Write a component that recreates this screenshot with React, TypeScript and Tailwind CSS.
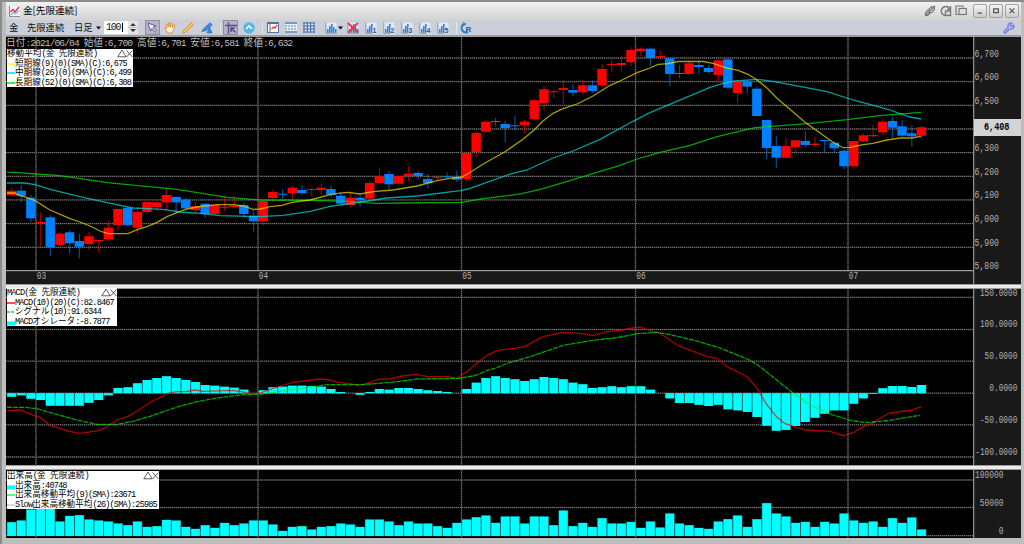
import type { ReactNode } from "react";
import { Wrench } from "lucide-react";

type Point = [number, number];
// color, high, body top, body bottom, low
type Candle = ["r" | "b", number, number, number, number];

const STEP = 9.68;
const START = 11.5;
const MONTHS = [
  { x: 36, label: "03" },
  { x: 258, label: "04" },
  { x: 461.5, label: "05" },
  { x: 635.5, label: "06" },
  { x: 848, label: "07" },
];

const candles: Candle[] = [
  ["r", 187.7, 190.7, 195.3, 195.7], ["b", 185, 190.7, 196, 202], ["b", 194.7, 197.7, 218.3, 222],
  ["r", 212.7, 222, 223, 246.7], ["b", 215, 217.3, 247.3, 256], ["r", 231.7, 233.7, 245, 247.7],
  ["b", 230.7, 232.3, 243.3, 253.7], ["b", 234, 241, 246.7, 258.3], ["r", 231.7, 236.3, 244, 250],
  ["r", 240, 240, 241, 252.7], ["r", 221.3, 227.7, 239.3, 240.7], ["r", 209, 209, 225.3, 231],
  ["b", 206.7, 208, 225.3, 225.7], ["r", 207.3, 212, 227.7, 234.7], ["r", 201, 202, 212, 214],
  ["r", 201.7, 202.3, 207, 210.7], ["r", 187.3, 195, 202.3, 210.3], ["b", 196.3, 197, 202.3, 213.3],
  ["b", 197.7, 199.7, 208.3, 209.3], ["r", 201.7, 206, 210.3, 213.3], ["b", 203.3, 203.7, 214, 217.7],
  ["r", 205, 205, 214, 214], ["r", 196, 206.7, 207.7, 211.3], ["r", 196, 205.7, 207, 207.3],
  ["b", 202.7, 205, 214, 218], ["b", 210, 215.7, 221.3, 231.7], ["r", 199.3, 201, 221.3, 225.3],
  ["r", 189.3, 192, 198, 202.3], ["b", 189.3, 193.7, 194.7, 198.7], ["r", 185.7, 187.7, 193.3, 199],
  ["b", 185, 190, 193.3, 194.7], ["r", 188, 189, 190, 196], ["r", 183.3, 187.7, 190, 194.7],
  ["b", 185.7, 189, 194.7, 197.3], ["b", 192.3, 195.7, 203.7, 204.7], ["r", 191.3, 197.7, 205, 207],
  ["b", 194.7, 197.7, 200.3, 206.7], ["r", 180.3, 183, 198.7, 199.7], ["r", 167.3, 176.3, 183, 184],
  ["b", 171, 174, 184.3, 189.3], ["r", 176, 176, 183.7, 184.3], ["r", 166, 173.7, 176, 181.7],
  ["b", 171, 173, 176, 179.3], ["b", 174.3, 179, 183.3, 188.3], ["r", 176.3, 177.3, 178.3, 180],
  ["b", 172.7, 176.3, 177.3, 178.7], ["b", 170.7, 177, 179.7, 182], ["r", 152, 153, 179.3, 181.3],
  ["r", 131, 133, 152, 157.7], ["r", 120.3, 121.7, 131.7, 133.3], ["b", 117.7, 121, 122, 126.3],
  ["b", 121, 124, 128, 142.7], ["b", 116, 125.3, 126.3, 131], ["r", 120, 121.7, 125.3, 133.7],
  ["r", 99, 100.3, 119.3, 120], ["r", 86, 89.3, 103.3, 110.7], ["r", 89.3, 91.3, 92.3, 98],
  ["r", 79.7, 88, 90, 104], ["b", 84.7, 90, 92.7, 96], ["r", 80, 85.3, 92.3, 94],
  ["b", 80.3, 85.3, 91, 93], ["r", 64, 69, 85.3, 87.7], ["r", 59.3, 64, 65, 72.7],
  ["r", 56, 63, 65, 71.3], ["r", 47.3, 50, 62.3, 66.3], ["r", 47.3, 48.7, 51.3, 56],
  ["b", 47.3, 48.7, 58, 66.3], ["r", 50, 56, 57, 58], ["b", 58.3, 58.3, 74, 86],
  ["b", 65, 73, 74, 78], ["r", 60, 63.3, 74, 75.7], ["b", 60.3, 65, 67, 74],
  ["b", 65, 68, 72, 73.3], ["r", 59.3, 60.3, 75, 82], ["b", 59.3, 59.3, 87.7, 89],
  ["r", 80.3, 81.3, 93, 102.7], ["b", 80, 81.3, 86.7, 93.3], ["b", 86.7, 88.7, 116, 116],
  ["b", 120, 120, 148, 159], ["b", 136.3, 146, 157.7, 167.7], ["r", 138.7, 146, 157.7, 157.7],
  ["r", 140.3, 140.3, 147.3, 152.7], ["b", 131, 141, 145, 147], ["r", 136.7, 143.7, 145, 146.7],
  ["b", 139.3, 140, 141, 152.7], ["b", 141.7, 142.7, 148.3, 152.3], ["b", 149.3, 150.7, 166.3, 169.3],
  ["r", 141, 141, 166.3, 169.3], ["r", 133.3, 135.3, 141.3, 142], ["r", 124.7, 135, 136.3, 137],
  ["r", 120.3, 121.7, 132.3, 135], ["b", 117, 121, 127.7, 138.3], ["b", 120, 126.3, 135.7, 137],
  ["b", 125.7, 133.3, 136.3, 146.7], ["r", 125.7, 127.3, 135.7, 139.7],
];

const shortMa: Point[] = [
  [7, 193], [15, 193], [20, 195.7], [27, 197.7], [35, 200.7], [50, 210], [70, 218.7], [80, 222], [90, 226],
  [100, 231], [108, 233.6], [128, 233.6], [138, 229.3], [147, 226.7], [157, 222.3], [167, 216.7], [177, 212.7],
  [187, 209], [197, 207], [217, 204.7], [233, 204.7], [243, 206], [253, 209.3], [260, 209], [270, 206.7],
  [282, 205.3], [292, 202.3], [310, 200], [330, 194.7], [338, 193.3], [348, 192.3], [360, 194], [373, 191.7],
  [393, 190], [417, 186], [437, 180.7], [450, 178.3], [462, 177], [467, 174.3], [485, 163], [505, 151.7],
  [523, 139.3], [535, 129.3], [542, 121.7], [553, 113.3], [563, 108.7], [577, 104], [593, 96], [610, 85.3],
  [620, 81], [637, 72.7], [650, 68], [658, 64.3], [668, 63.7], [678, 61.5], [703, 61.5], [713, 63.3], [727, 68],
  [738, 70.3], [748, 74.3], [758, 80.7], [767, 88], [777, 98.3], [805, 122.3], [833, 142.3], [843, 147.7],
  [850, 147.3], [863, 144.7], [873, 143.3], [887, 140], [900, 138], [912, 138], [921, 136.3],
];
const midMa: Point[] = [
  [7, 183], [25, 183], [35, 184.7], [50, 189.3], [80, 196.7], [107, 202.7], [133, 208], [163, 209.3], [180, 212],
  [200, 213.3], [220, 215.7], [260, 216.7], [283, 215.3], [310, 211.3], [330, 206.3], [347, 204], [387, 198],
  [417, 196], [460, 190.7], [468, 189], [510, 174], [527, 170], [553, 158], [573, 151], [600, 139.3],
  [633, 121.3], [650, 112.7], [710, 87.3], [722, 83.7], [735, 81], [757, 79.3], [773, 81.3], [827, 91.7],
  [853, 100], [887, 109], [910, 117], [921, 119],
];
const longMa: Point[] = [
  [7, 172.3], [15, 172.3], [35, 174], [60, 175.7], [107, 182.7], [177, 189.3], [227, 197.3], [260, 200],
  [310, 200.3], [350, 201.3], [375, 203.3], [403, 203], [462, 202.3], [483, 198.7], [510, 195.3], [522, 193.7],
  [543, 188.7], [583, 176.7], [620, 165.3], [637, 159], [660, 152.3], [690, 145.3], [717, 136.7], [755, 127.7],
  [810, 123.3], [847, 119.7], [880, 115.7], [921, 112.3],
];
const macdLine: Point[] = [
  [7, 410.7], [21, 410], [28, 413.3], [40, 417.3], [50, 425.3], [68, 431], [79, 433.3], [100, 430.3], [108, 426],
  [117, 420], [128, 416.3], [137, 411.3], [147, 404.3], [167, 393.7], [177, 391.7], [187, 391.5], [195, 390],
  [203, 391.3], [233, 390.3], [245, 392.3], [253, 394], [260, 393], [277, 387], [293, 382.3], [320, 379],
  [330, 380], [337, 382.3], [350, 383.7], [359, 385.7], [370, 382.7], [378, 379.3], [390, 379], [402, 376],
  [416, 374.3], [427, 376.7], [448, 376.7], [457, 378.3], [468, 370.7], [478, 362.3], [487, 355.3], [497, 350.7],
  [515, 348.3], [525, 346.3], [543, 336.7], [563, 332.3], [583, 333.7], [592, 335.7], [608, 331.7], [620, 330.3],
  [632, 328], [640, 327], [650, 330.7], [660, 333.3], [678, 345.7], [707, 356.7], [717, 358.3], [727, 366.7],
  [747, 376.7], [757, 388.3], [767, 405], [777, 417.3], [785, 423.7], [805, 430], [830, 431.3], [843, 435.7],
  [853, 432.7], [863, 426.7], [872, 423.3], [882, 417], [890, 413], [912, 410], [921, 406.7],
];
const signalLine: Point[] = [
  [7, 407.3], [24, 407.3], [37, 408.7], [55, 414], [77, 420], [97, 424.3], [117, 424.3], [133, 421.3],
  [150, 416.3], [177, 407], [197, 401.7], [217, 398], [243, 394.7], [260, 394.3], [290, 390], [327, 384.7],
  [363, 384.7], [397, 381.7], [417, 379], [460, 378.3], [477, 375], [487, 370.3], [497, 367.7], [507, 363.3],
  [530, 356.7], [563, 345.3], [593, 340.3], [617, 337.7], [637, 333.7], [657, 332.3], [670, 334.7], [693, 340],
  [720, 348], [750, 360.3], [760, 366.7], [792, 392.3], [810, 405], [833, 415], [850, 420.3], [867, 422.7],
  [890, 420.3], [920, 415.3],
];

const MACD_ZERO = 393.2;
const oscillator = [
  396.7, 395.3, 398.7, 400, 405.7, 405.7, 405.7, 405.7, 402.7, 400, 395.3, 388, 387.3, 383.3, 380, 378, 376.3,
  378, 380, 382, 385, 385.7, 386.7, 387.7, 389.7, 393.2, 390.3, 387.3, 386.7, 385.7, 385.7, 386, 386.7, 389, 392,
  393.2, 394.7, 392, 389, 389.7, 388, 388, 389, 390.3, 391, 392, 393.2, 389, 382.7, 378, 376.3, 378, 379.3, 381,
  379.3, 377, 378, 379.3, 382.7, 384.3, 388, 387.3, 386.3, 387.3, 386.3, 386.3, 389.7, 393.2, 398.3, 403, 403,
  404.7, 406, 404.7, 409.3, 410.3, 412, 417, 425.7, 430.7, 430, 426, 422, 417.7, 413.7, 410.3, 410.3, 403.7,
  398.3, 394, 388.3, 386, 386, 387, 385,
];

// bar heights in thirds of a pixel
const volumes = [
  41, 46, 79, 81, 81, 43, 60, 62, 49, 46, 43, 37, 32, 43, 27, 29, 48, 46, 27, 21, 32, 24, 39, 32, 37, 46, 46, 34,
  15, 27, 29, 19, 27, 29, 37, 34, 27, 49, 49, 43, 32, 43, 37, 37, 29, 24, 39, 49, 56, 61, 39, 58, 58, 37, 58, 58,
  32, 76, 29, 39, 27, 53, 37, 37, 42, 24, 43, 25, 67, 37, 32, 24, 21, 43, 50, 61, 27, 50, 98, 67, 58, 39, 42, 27,
  42, 37, 67, 46, 39, 43, 27, 53, 39, 55, 19,
];

const center = (i: number) => START + i * STEP;
const toPoints = (pts: Point[]) => pts.map((p) => p.join(",")).join(" ");

// half-width characters are set tighter than the kanji / kana around them
function MixedText({ text, tight }: { text: string; tight: string }) {
  const runs = text.match(/[\x20-\x7e]+|[^\x20-\x7e]+/g) ?? [];
  return (
    <>
      {runs.map((run, i) => (
        <span key={i} className={/[\x20-\x7e]/.test(run) ? tight : undefined}>
          {run}
        </span>
      ))}
    </>
  );
}

function Grid({ rows, top, bottom }: { rows: number[]; top: number; bottom: number }) {
  return (
    <g>
      {rows.map((y) => (
        <g key={y}>
          <line x1={6} x2={973} y1={y} y2={y} stroke="#2e2e2e" strokeWidth={1.3} />
          <line x1={6} x2={973} y1={y} y2={y} stroke="#7a7a7a" strokeWidth={1} strokeDasharray="1 1" />
        </g>
      ))}
      {MONTHS.map((m) => (
        <g key={m.x}>
          <line x1={m.x} x2={m.x} y1={top} y2={bottom} stroke="#333333" strokeWidth={1.4} />
          <line x1={m.x} x2={m.x} y1={top} y2={bottom} stroke="#707070" strokeWidth={1} strokeDasharray="1 1" />
        </g>
      ))}
    </g>
  );
}

function Line({ data, color, dash }: { data: Point[]; color: string; dash?: string }) {
  return (
    <polyline
      points={toPoints(data)}
      fill="none"
      stroke={color}
      strokeOpacity={0.7}
      strokeWidth={1.3}
      strokeDasharray={dash}
    />
  );
}

function Plot({ top, height, rows, children }: { top: number; height: number; rows: number[]; children: ReactNode }) {
  return (
    <svg width={967} height={height} viewBox={`6 ${top} 967 ${height}`} className="block shrink-0 bg-black">
      <Grid rows={rows} top={top} bottom={top + height} />
      {children}
    </svg>
  );
}

function Axis({
  top,
  height,
  labels,
  right,
  charWidth,
  children,
}: {
  top: number;
  height: number;
  labels: [string, number][];
  right: number;
  charWidth: number;
  children?: ReactNode;
}) {
  return (
    <svg
      width={48}
      height={height}
      viewBox={`973 ${top} 48 ${height}`}
      className="block shrink-0 bg-[#191919] font-['Liberation_Mono',monospace] text-[10px]"
    >
      <rect x={973} y={top} width={1.3} height={height} fill="#8c8c8c" />
      {labels.map(([text, y]) => (
        <text
          key={text}
          transform={`translate(${right - text.length * charWidth} ${y + 3.3}) scale(${charWidth / 6} 1)`}
          fill="#b0b0b0"
        >
          {text}
        </text>
      ))}
      {children}
    </svg>
  );
}

type LegendRow = { text: string; color: string; kind: "line" | "dash" | "box" };

function Legend({ title, rows, className }: { title: string; rows: LegendRow[]; className: string }) {
  return (
    <div
      className={`absolute left-px bg-white pt-px text-black text-[8.6px] leading-[9.5px] whitespace-pre font-['Liberation_Mono','Noto_Sans_CJK_JP',monospace] ${className}`}
    >
      <div className="flex h-[9.5px] justify-between">
        <span>
          <MixedText text={title} tight="tracking-[-0.86px]" />
        </span>
        <svg width={16} height={9} viewBox="0 0 16 9" fill="none" stroke="#333" strokeWidth={0.8} className="-mt-px">
          <path d="M.8 7.8 5 1l4.2 6.800z" />
          <path d="m9.500 1.500 6 6.500M15.500 1.500l-6 6.500" />
        </svg>
      </div>
      {rows.map((row) => (
        <div key={row.text} className="flex h-[9.5px]">
          <svg width={8} height={9} viewBox="0 0 8 9" className="shrink-0">
            {row.kind === "box" ? (
              <rect y={3.5} width={8} height={4} fill={row.color} />
            ) : (
              <line
                x1={0}
                x2={8}
                y1={4}
                y2={4}
                stroke={row.color}
                strokeWidth={1.7}
                strokeDasharray={row.kind === "dash" ? "3 1" : undefined}
              />
            )}
          </svg>
          <span>
            <MixedText text={row.text} tight="tracking-[-0.86px]" />
          </span>
        </div>
      ))}
    </div>
  );
}

function Divider() {
  return <div className="h-[5px] shrink-0 border-t border-b border-[#9a9a9a] bg-[#ececec]" />;
}

function ToolButton({ active, children }: { active?: boolean; children: ReactNode }) {
  return (
    <div
      className={`flex h-[15px] w-[15px] shrink-0 items-center justify-center ${
        active ? "border border-[#8d8da0] bg-[#b4b4c4]" : ""
      }`}
    >
      {children}
    </div>
  );
}

function Separator() {
  return <div className="h-3 w-px shrink-0 bg-[#e4e6ec]" />;
}

function BarsIcon({ mark }: { mark?: string }) {
  return (
    <svg width={12} height={12} viewBox="0 0 12 12">
      <rect x={0.5} y={0.5} width={11} height={11} fill="#e3e7ef" />
      <path d="M.8.5v10.700h11" fill="none" stroke="#8b95a8" />
      <path d="M2 7h1.600v3.800H2zM4 4h1.600v6.800H4zM6 2h1.600v8.800H6zM8 5h1.500v5.800H8zM10 7h1.500v3.800H10z" fill="#2c84e8" />
      {mark === "x" && <path d="m1 1 10 9.500M11 1 1 10.500" stroke="#e8383a" strokeWidth={1.8} />}
      {mark && mark !== "x" && (
        <>
          <rect x={7.500} y={5} width={4.500} height={7} fill="#dfe4ee" />
          <text x={7.300} y={11} fontSize={7.500} fontWeight="bold" fill="#2558a8" fontFamily="Liberation Sans">
            {mark}
          </text>
        </>
      )}
    </svg>
  );
}

function TitleBar() {
  return (
    <div className="flex h-[18px] shrink-0 items-center bg-linear-to-b from-[#f1f1f1] to-[#d3d3d3] pl-[3px] pr-0.5">
      <svg width={11} height={11} viewBox="0 0 11 11" fill="none">
        <rect width={11} height={11} fill="#f0f3f7" />
        <path d="M.5 0v10.500H11" stroke="#8a8f98" />
        <path d="m1.500 6 2.500-2.500L6 6l4-5" stroke="#d8323c" strokeWidth={1.3} />
        <path d="m1.500 9 3-2.500 2 1.500L10 4.500" stroke="#4a86d0" />
      </svg>
      <span className="ml-[3px] text-[9.600px] leading-none text-black">金[先限連続]</span>
      <div className="ml-auto flex items-center">
        <svg width={12} height={12} viewBox="0 0 12 12" fill="none" stroke="#777" strokeWidth={1.2}>
          <path d="M5 4 8 1.500q3 0 2.500 2.500L8 7.500H5zM4 5 1.500 8q-.5 2.500 2 2.500L6.500 8M1 11 11 1" />
        </svg>
        <svg width={12} height={12} viewBox="0 0 12 12" fill="none" stroke="#777" strokeWidth={1.4} className="ml-1">
          <path d="M9.500 3.500A4.500 4.500 0 1 0 5 10.500M10.500 1v3.500H7" />
          <rect x={5.500} y={6} width={5} height={4.500} />
        </svg>
        <svg width={12} height={12} viewBox="0 0 12 12" fill="none" stroke="#777" strokeWidth={1.2} className="ml-[3px]">
          <path d="M8 2.500V1H1v8.500h2.500" />
          <rect x={4} y={3.500} width={7.300} height={6} />
        </svg>
        <div className="ml-1.5 flex gap-0.5">
          {["M3 8.500h5", "M3 3.500h5.500v4.500H3z", "m3 3 5.500 5.500M8.500 3 3 8.500"].map((d) => (
            <svg
              key={d}
              width={14}
              height={14}
              viewBox="-1.200 -1 14 14"
              fill="none"
              stroke="#555"
              strokeWidth={1.4}
              className="rounded-xs border border-[#a0a0a0] bg-linear-to-b from-[#f4f4f4] to-[#cccccc]"
            >
              <path d={d} />
            </svg>
          ))}
        </div>
      </div>
    </div>
  );
}

function Toolbar() {
  return (
    <div className="flex h-[15px] shrink-0 items-center bg-[#cbcfd9] text-[9.300px] leading-none text-[#111]">
      <span className="ml-[3px] w-[18px] shrink-0">金</span>
      <span className="w-[47px] shrink-0">先限連続</span>
      <span className="w-[22px] shrink-0">日足</span>
      <svg width={5} height={4} viewBox="0 0 5 4">
        <path d="M0 .5h5L2.500 3.500z" />
      </svg>
      <div className="ml-[3px] flex h-[13px] w-[24px] shrink-0 items-center bg-white pl-0.5 font-['Liberation_Mono',monospace] text-[10px] tracking-[-1.200px]">
        100<span className="ml-0.5 h-[9px] w-px bg-black" />
      </div>
      <svg width={10} height={13} viewBox="0 0 10 13" className="shrink-0">
        <rect width={10} height={13} fill="#e4e4e4" />
        <path d="M2 5h6L5 2zM2 8h6l-3 3z" fill="#333" />
        <path d="M0 6.500h10" stroke="#aaa" strokeWidth={0.7} />
      </svg>
      <div className="ml-[7px]">
        <ToolButton active>
          <svg width={11} height={11} viewBox="0 0 11 11" fill="#f4f0ff" stroke="#6750a4">
            <path d="m1 1 8 3-3 1.500 3.500 3.500-1.200 1.200L4.800 6.700 3.500 9z" />
          </svg>
        </ToolButton>
      </div>
      <div className="ml-0.5">
        <ToolButton>
          <svg width={12} height={12} viewBox="0 0 12 12" fill="#fff1dc" stroke="#d98a2c" strokeWidth={0.9}>
            <path d="M4 11 .8 6.500q0-1.300 1.200-.8l1 1L2 2.500q.5-1 1.300 0L4.500 5 4.300 1q.7-1 1.400 0l.5 4L7 1.300q.9-.8 1.300.2L8 5.500 9.700 3q1.200-.5 1 .7L9.500 8 8 11z" />
          </svg>
        </ToolButton>
      </div>
      <div className="ml-[3px]">
        <ToolButton>
          <svg width={12} height={12} viewBox="0 0 12 12" fill="#f8c060" stroke="#d98a2c" strokeWidth={0.8}>
            <path d="m.8 11.200.9-3L8.800 1q1.800-.2 2.200 2L3.700 10.300z" />
          </svg>
        </ToolButton>
      </div>
      <div className="ml-1">
        <ToolButton>
          <svg width={12} height={12} viewBox="0 0 12 12" fill="#3f8be0" stroke="#2866b8" strokeWidth={0.7}>
            <path d="m.8 9.500 2-3L9 .8l2.200 2L5.500 8.500zM8.700 5.500 11 11H6z" />
          </svg>
        </ToolButton>
      </div>
      <div className="ml-1.5 mr-0.5">
        <Separator />
      </div>
      <ToolButton active>
        <svg width={12} height={12} viewBox="0 0 12 12" fill="none" stroke="#5b4a90">
          <path d="M0 3.500h12M3.500 0v12" strokeWidth={1.300} />
          <path d="M10.500 10.500 6.500 6.500M6 10V6h4" strokeWidth={1.500} />
        </svg>
      </ToolButton>
      <div className="ml-[3px]">
        <ToolButton>
          <svg width={12} height={12} viewBox="0 0 12 12" fill="none">
            <circle cx={6} cy={6} r={5.700} fill="#56b3e2" />
            <path d="m3 7 3-3 3 3" stroke="#fff" strokeWidth={1.600} />
          </svg>
        </ToolButton>
      </div>
      <div className="ml-1.5 mr-0.5">
        <Separator />
      </div>
      <ToolButton>
        <svg width={12} height={11} viewBox="0 0 12 11" fill="none">
          <rect x={0.5} y={0.5} width={11} height={10} fill="#f7f9fc" stroke="#53749f" />
          <path d="M.5 1.500h11M3 1v9" stroke="#53749f" />
          <path d="m4.500 7 2-2 1.500 1 2-3" stroke="#e03a30" strokeWidth={1.300} />
        </svg>
      </ToolButton>
      <div className="ml-[3px]">
        <ToolButton>
          <svg width={12} height={11} viewBox="0 0 12 11" fill="none" stroke="#4b7fc0">
            <rect width={12} height={11} fill="#eef3fa" stroke="none" />
            <path d="M0 1h12M0 10h12" strokeWidth={1.500} />
            <path d="M0 4h12M0 7h12" strokeDasharray="2 1" />
          </svg>
        </ToolButton>
      </div>
      <div className="ml-[3px]">
        <ToolButton>
          <svg width={12} height={11} viewBox="0 0 12 11" fill="none" stroke="#3c64a8">
            <rect width={12} height={11} fill="#dce6f5" stroke="none" />
            <path d="M0 1h12M0 4h12M0 7h12M0 10h12M1 0v11M4.300 0v11M7.700 0v11M11 0v11" />
          </svg>
        </ToolButton>
      </div>
      <div className="ml-[7px]">
        <ToolButton>
          <BarsIcon />
        </ToolButton>
      </div>
      <svg width={5} height={4} viewBox="0 0 5 4">
        <path d="M0 .5h5L2.500 3.500z" />
      </svg>
      <div className="ml-0.5 flex gap-[3px]">
        {["x", "1", "2", "3", "4", "5"].map((mark) => (
          <ToolButton key={mark}>
            <BarsIcon mark={mark} />
          </ToolButton>
        ))}
      </div>
      <div className="ml-1.5 mr-px">
        <Separator />
      </div>
      <ToolButton>
        <svg width={12} height={12} viewBox="0 0 12 12" fill="none">
          <path d="M8 10A4.300 4.300 0 1 1 4 2" stroke="#1f86cf" strokeWidth={2} />
          <path d="M3 0v4.500L6.500 2z" fill="#1f86cf" />
          <text x={5.500} y={9.500} fontSize={8} fontWeight="bold" fill="#2a5a94" fontFamily="Liberation Sans">
            R
          </text>
        </svg>
      </ToolButton>
      <Wrench className="ml-auto mr-1.5 h-3 w-3 text-[#7676ee]" strokeWidth={2.500} />
    </div>
  );
}

function PricePanel() {
  const rows = Array.from({ length: 9 }, (_, k) => 58 + k * 23.66);
  const prices = ["6,700", "6,600", "6,500", "6,400", "6,300", "6,200", "6,100", "6,000", "5,900", "5,800"];
  const labels = prices
    .map((p, k): [string, number] => [p, 53.2 + k * 23.66])
    .filter(([p]) => p !== "6,400");

  return (
    <div className="relative flex h-[247px] shrink-0">
      <div className="w-[967px] shrink-0">
        <Plot top={37} height={233} rows={rows}>
          {candles.map(([c, high, top, bottom, low], i) => {
            const fill = c === "r" ? "#ff0000" : "#0080ff";
            return (
              <g key={i} fill={fill}>
                <rect x={center(i) - 0.5} y={high} width={1.2} height={low - high} opacity={0.6} />
                <rect x={center(i) - 4.7} y={top} width={9.4} height={bottom - top} />
              </g>
            );
          })}
          <Line data={longMa} color="#00e800" />
          <Line data={midMa} color="#00e0e0" />
          <Line data={shortMa} color="#f0e000" />
        </Plot>
        <svg
          width={967}
          height={14}
          viewBox="6 270 967 14"
          className="block bg-[#191919] font-['Liberation_Mono',monospace] text-[10px]"
        >
          <rect x={6} y={270} width={967} height={1.2} fill="#9c9c9c" />
          {MONTHS.map((m) => (
            <text key={m.label} transform={`translate(${m.x + 0.8} 279) scale(0.78 1)`} fill="#b0b0b0">
              {m.label}
            </text>
          ))}
        </svg>
      </div>
      <Axis top={37} height={247} labels={labels} right={999} charWidth={4.9}>
        <rect x={974} y={119} width={47} height={17} fill="#d3d3d3" />
        <text transform="translate(984 130) scale(0.85 1)" fontWeight="bold" fill="#000">
          6,408
        </text>
      </Axis>
      <div className="absolute left-0 top-px whitespace-pre font-['Liberation_Mono','Noto_Sans_CJK_JP',monospace] text-[9.700px] leading-[11px] text-[#bdbdbd]">
        <MixedText text="日付:2021/06/04 始値:6,700 高値:6,701 安値:6,581 終値:6,632" tight="tracking-[-0.960px]" />
      </div>
      <Legend
        title="移動平均(金 先限連続)"
        className="top-3 w-[126px] h-[38px]"
        rows={[
          { text: "短期線(9)(0)(SMA)(C):6,675", color: "#ffff40", kind: "line" },
          { text: "中期線(26)(0)(SMA)(C):6,499", color: "#00e8ff", kind: "line" },
          { text: "長期線(52)(0)(SMA)(C):6,308", color: "#20e820", kind: "line" },
        ]}
      />
    </div>
  );
}

function MacdPanel() {
  return (
    <div className="relative flex h-[176px] shrink-0">
      <Plot top={289} height={176} rows={[297.3, 329.5, 361.2, 393.2, 424.8, 457]}>
        {oscillator.map((y, i) => (
          <g key={i}>
            <rect
              x={center(i) - 4.8}
              y={Math.min(y, MACD_ZERO)}
              width={9.68}
              height={Math.abs(y - MACD_ZERO)}
              fill="#008a8a"
            />
            <rect
              x={center(i) - 4.2}
              y={Math.min(y, MACD_ZERO)}
              width={8.6}
              height={Math.abs(y - MACD_ZERO)}
              fill="#00ffff"
            />
          </g>
        ))}
        <Line data={macdLine} color="#f00000" />
        <Line data={signalLine} color="#00e800" dash="5 1" />
      </Plot>
      <Axis
        top={289}
        height={176}
        right={1017.5}
        charWidth={4.7}
        labels={[
          ["150.0000", 292.8],
          ["100.0000", 324],
          ["50.0000", 355.7],
          ["0.0000", 387.8],
          ["-50.0000", 419.5],
          ["-100.0000", 451.5],
        ]}
      />
      <Legend
        title="MACD(金 先限連続)"
        className="-top-px w-[110px] h-[38px]"
        rows={[
          { text: "MACD(10)(20)(C):82.8467", color: "#ff3030", kind: "line" },
          { text: "シグナル(10):91.6344", color: "#20e020", kind: "dash" },
          { text: "MACDオシレータ:-8.7877", color: "#00ffff", kind: "box" },
        ]}
      />
    </div>
  );
}

function VolumePanel() {
  return (
    <div className="relative flex h-[68px] shrink-0">
      <Plot top={470} height={68} rows={[480, 507.5, 535.7]}>
        {volumes.map((v, i) => (
          <g key={i}>
            <rect x={center(i) - 4.8} y={535.7 - v / 3} width={9.68} height={v / 3} fill="#008a8a" />
            <rect x={center(i) - 4.2} y={536 - v / 3} width={8.6} height={v / 3} fill="#00ffff" />
          </g>
        ))}
      </Plot>
      <Axis
        top={470}
        height={68}
        right={1003.5}
        charWidth={4.75}
        labels={[
          ["100000", 474.7],
          ["50000", 502.7],
          ["0", 530.5],
        ]}
      />
      <Legend
        title="出来高(金 先限連続)"
        className="top-px w-[152px] h-[38px]"
        rows={[
          { text: "出来高:40748", color: "#00ffff", kind: "box" },
          { text: "出来高移動平均(9)(SMA):23671", color: "#40ff40", kind: "line" },
          { text: "Slow出来高移動平均(26)(SMA):25985", color: "#ffa0ff", kind: "dash" },
        ]}
      />
    </div>
  );
}

export default function App() {
  return (
    <div className="h-[544px] w-[1024px] overflow-hidden border-l-2 border-t-2 border-[#8b8b8b] bg-[#bdbdbd] font-['Noto_Sans_CJK_JP',sans-serif]">
      <div className="flex h-full flex-col pl-1 pr-[3px]">
        <TitleBar />
        <Toolbar />
        <div className="h-0.5 shrink-0 bg-[#9c9c9c]" />
        <PricePanel />
        <Divider />
        <MacdPanel />
        <Divider />
        <VolumePanel />
      </div>
    </div>
  );
}
